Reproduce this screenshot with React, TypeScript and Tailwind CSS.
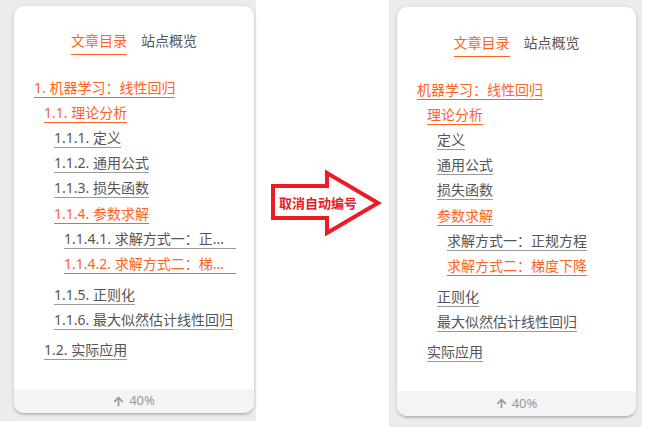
import { FaArrowUp } from "react-icons/fa";

type Item = { label: string; level: number; active?: boolean; mt?: number; fill?: boolean };

const leftItems: Item[] = [
  { label: "1. 机器学习：线性回归", level: 0, active: true },
  { label: "1.1. 理论分析", level: 1, active: true },
  { label: "1.1.1. 定义", level: 2 },
  { label: "1.1.2. 通用公式", level: 2 },
  { label: "1.1.3. 损失函数", level: 2 },
  { label: "1.1.4. 参数求解", level: 2, active: true, mt: 1 },
  { label: "1.1.4.1. 求解方式一：正...", level: 3, fill: true },
  { label: "1.1.4.2. 求解方式二：梯...", level: 3, active: true, fill: true },
  { label: "1.1.5. 正则化", level: 2, mt: 6 },
  { label: "1.1.6. 最大似然估计线性回归", level: 2 },
  { label: "1.2. 实际应用", level: 1, mt: 5 },
];

const rightItems: Item[] = [
  { label: "机器学习：线性回归", level: 0, active: true },
  { label: "理论分析", level: 1, active: true },
  { label: "定义", level: 2 },
  { label: "通用公式", level: 2 },
  { label: "损失函数", level: 2 },
  { label: "参数求解", level: 2, active: true, mt: 1 },
  { label: "求解方式一：正规方程", level: 3 },
  { label: "求解方式二：梯度下降", level: 3, active: true },
  { label: "正则化", level: 2, mt: 6 },
  { label: "最大似然估计线性回归", level: 2 },
  { label: "实际应用", level: 1, mt: 5 },
];

const levelPad = ["pl-0", "pl-[10px]", "pl-[20px]", "pl-[30px]"];
const mtCls: Record<number, string> = { 0: "", 1: "mt-[1px]", 5: "mt-[5px]", 6: "mt-[6px]" };

function Card({
  items,
  sizeCls,
  tabPad,
  footerCls,
}: {
  items: Item[];
  sizeCls: string;
  tabPad: string;
  footerCls: string;
}) {
  return (
    <div
      className={`flex flex-col overflow-hidden rounded-[10px] bg-white shadow-[0_2px_2px_0_rgba(0,0,0,0.12),0_3px_1px_-2px_rgba(0,0,0,0.06),0_1px_5px_0_rgba(0,0,0,0.12)] ${sizeCls}`}
    >
      <div className={`flex justify-center gap-[14px] text-[14px] leading-[20px] ${tabPad}`}>
        <span className="border-b border-[#fc6423] pb-[3px] text-[#fc6423]">文章目录</span>
        <span className="border-b border-transparent pb-[3px] text-[#555]">站点概览</span>
      </div>
      <ul className="mt-[18px] pl-[20px] pr-[18px] text-[14px]">
        {items.map((it, i) => (
          <li key={i} className={`flex h-[25px] pt-[6px] ${levelPad[it.level]} ${mtCls[it.mt ?? 0]}`}>
            <span
              className={`whitespace-nowrap border-b leading-[18px] ${it.fill ? "flex-1" : ""} ${
                it.active ? "border-[#fc6423] text-[#fc6423]" : "border-[#999] text-[#555]"
              }`}
            >
              {it.label}
            </span>
          </li>
        ))}
      </ul>
      <div
        className={`mt-auto flex items-center justify-center gap-[5px] bg-[#f4f4f4] text-[13px] text-[#999] ${footerCls}`}
      >
        <FaArrowUp className="h-[11px] w-[11px]" />
        <span>40%</span>
      </div>
    </div>
  );
}

export default function App() {
  return (
    <div className="flex h-[427px] w-[649px] items-start bg-white font-['Noto_Sans','Noto_Sans_CJK_SC',sans-serif]">
      <div className="h-[421px] w-[256px] shrink-0 bg-[#ececec] pl-[14px] pt-[6px]">
        <Card items={leftItems} sizeCls="w-[240px] h-[407px]" tabPad="pt-[25px]" footerCls="h-[24px]" />
      </div>
      <div className="h-[427px] w-[133px] shrink-0">
        <svg width="133" height="427" viewBox="0 0 133 427">
          <polygon
            points="17,186 71,186 71,173 122,203 71,233 71,218 17,218"
            fill="none"
            stroke="#ed1c24"
            strokeWidth="4"
            strokeLinejoin="miter"
          />
          <text
            x="23"
            y="208"
            fontSize="13"
            fontWeight="700"
            fill="#e4202c"
            fontFamily="'Noto Sans CJK SC', sans-serif"
          >
            取消自动编号
          </text>
        </svg>
      </div>
      <div className="h-[427px] w-[253px] shrink-0 bg-[#ececec] pl-[8px] pt-[7px]">
        <Card items={rightItems} sizeCls="w-[239px] h-[409px]" tabPad="pt-[26px]" footerCls="h-[25px]" />
      </div>
    </div>
  );
}
